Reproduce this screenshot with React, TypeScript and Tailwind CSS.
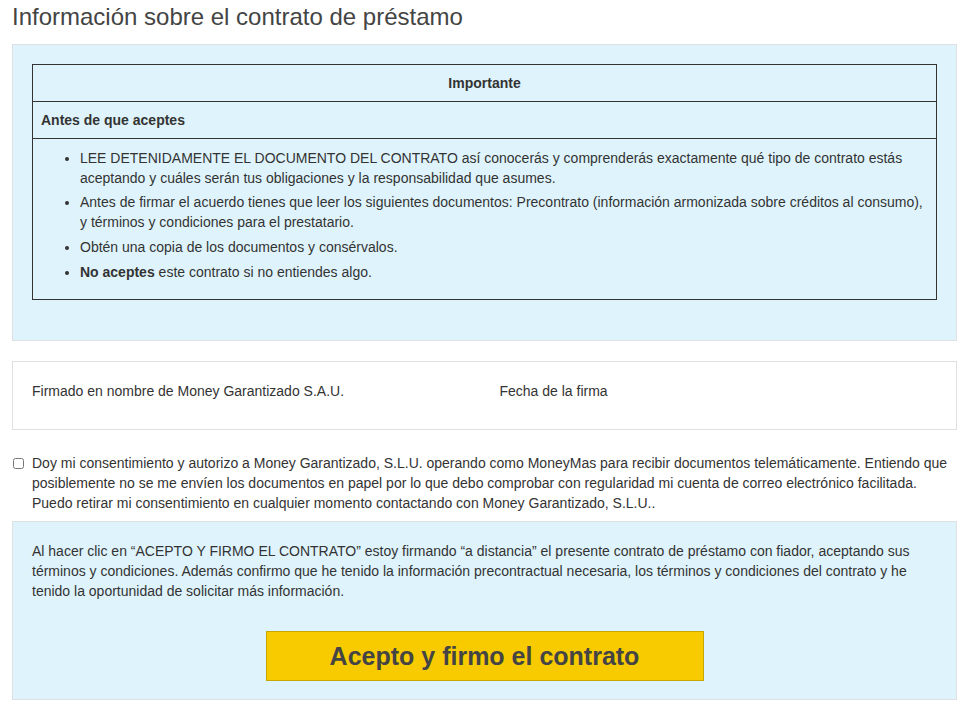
export default function App() {
  const font = { fontFamily: '"Liberation Sans", Arial, Helvetica, sans-serif' };
  return (
    <div style={font} className="w-[969px] h-[716px] bg-white text-[#333] text-[14px] leading-[20px] overflow-hidden">
      <div className="px-3">
        <h1 className="pt-[2px] text-[24px] leading-[30px] text-[#444] font-normal">
          Información sobre el contrato de préstamo
        </h1>

        {/* Important notice panel */}
        <div className="mt-[12px] bg-[#dff3fc] border border-[#dde1e3] pt-[19px] px-[19px] pb-[40px]">
          <div className="border border-[#333]">
            <div className="h-[37px] flex items-center justify-center font-bold border-b border-[#333]">
              Importante
            </div>
            <div className="h-[37px] flex items-center px-2 font-bold border-b border-[#333]">
              Antes de que aceptes
            </div>
            <ul className="list-disc pl-[47px] pr-3 pt-[9px] pb-[17px]">
              <li className="mb-[4px]">
                LEE DETENIDAMENTE EL DOCUMENTO DEL CONTRATO así conocerás y comprenderás exactamente qué tipo de contrato estás aceptando y cuáles serán tus obligaciones y la responsabilidad que asumes.
              </li>
              <li className="mb-[5px]">
                Antes de firmar el acuerdo tienes que leer los siguientes documentos: Precontrato (información armonizada sobre créditos al consumo), y términos y condiciones para el prestatario.
              </li>
              <li className="mb-[5px]">Obtén una copia de los documentos y consérvalos.</li>
              <li>
                <b>No aceptes</b> este contrato si no entiendes algo.
              </li>
            </ul>
          </div>
        </div>

        {/* Signature row */}
        <div className="mt-[20px] border border-[#dde1e3] bg-white px-[4px] pt-[19px] pb-[28px]">
          <div className="grid grid-cols-2">
            <div className="px-[15px]">Firmado en nombre de Money Garantizado S.A.U.</div>
            <div className="px-[15px]">Fecha de la firma</div>
          </div>
        </div>

        {/* Consent checkbox */}
        <label className="mt-[23px] flex items-start gap-[8px]">
          <input type="checkbox" className="mt-[5px] w-[11px] h-[11px] shrink-0 ml-[1px]" />
          <span>
            Doy mi consentimiento y autorizo a Money Garantizado, S.L.U. operando como MoneyMas para recibir documentos telemáticamente. Entiendo que posiblemente no se me envíen los documentos en papel por lo que debo comprobar con regularidad mi cuenta de correo electrónico facilitada. Puedo retirar mi consentimiento en cualquier momento contactando con Money Garantizado, S.L.U..
          </span>
        </label>

        {/* Accept panel */}
        <div className="mt-[8px] bg-[#dff3fc] border border-[#dde1e3] pt-[19px] px-[19px] pb-[18px]">
          <p>
            Al hacer clic en “ACEPTO Y FIRMO EL CONTRATO” estoy firmando “a distancia” el presente contrato de préstamo con fiador, aceptando sus términos y condiciones. Además confirmo que he tenido la información precontractual necesaria, los términos y condiciones del contrato y he tenido la oportunidad de solicitar más información.
          </p>
          <div className="mt-[30px] flex justify-center">
            <button className="w-[438px] h-[50px] bg-[#f7cb00] border border-[#c9a702] text-[#444] text-[25px] font-bold">
              Acepto y firmo el contrato
            </button>
          </div>
        </div>
      </div>
    </div>
  );
}
